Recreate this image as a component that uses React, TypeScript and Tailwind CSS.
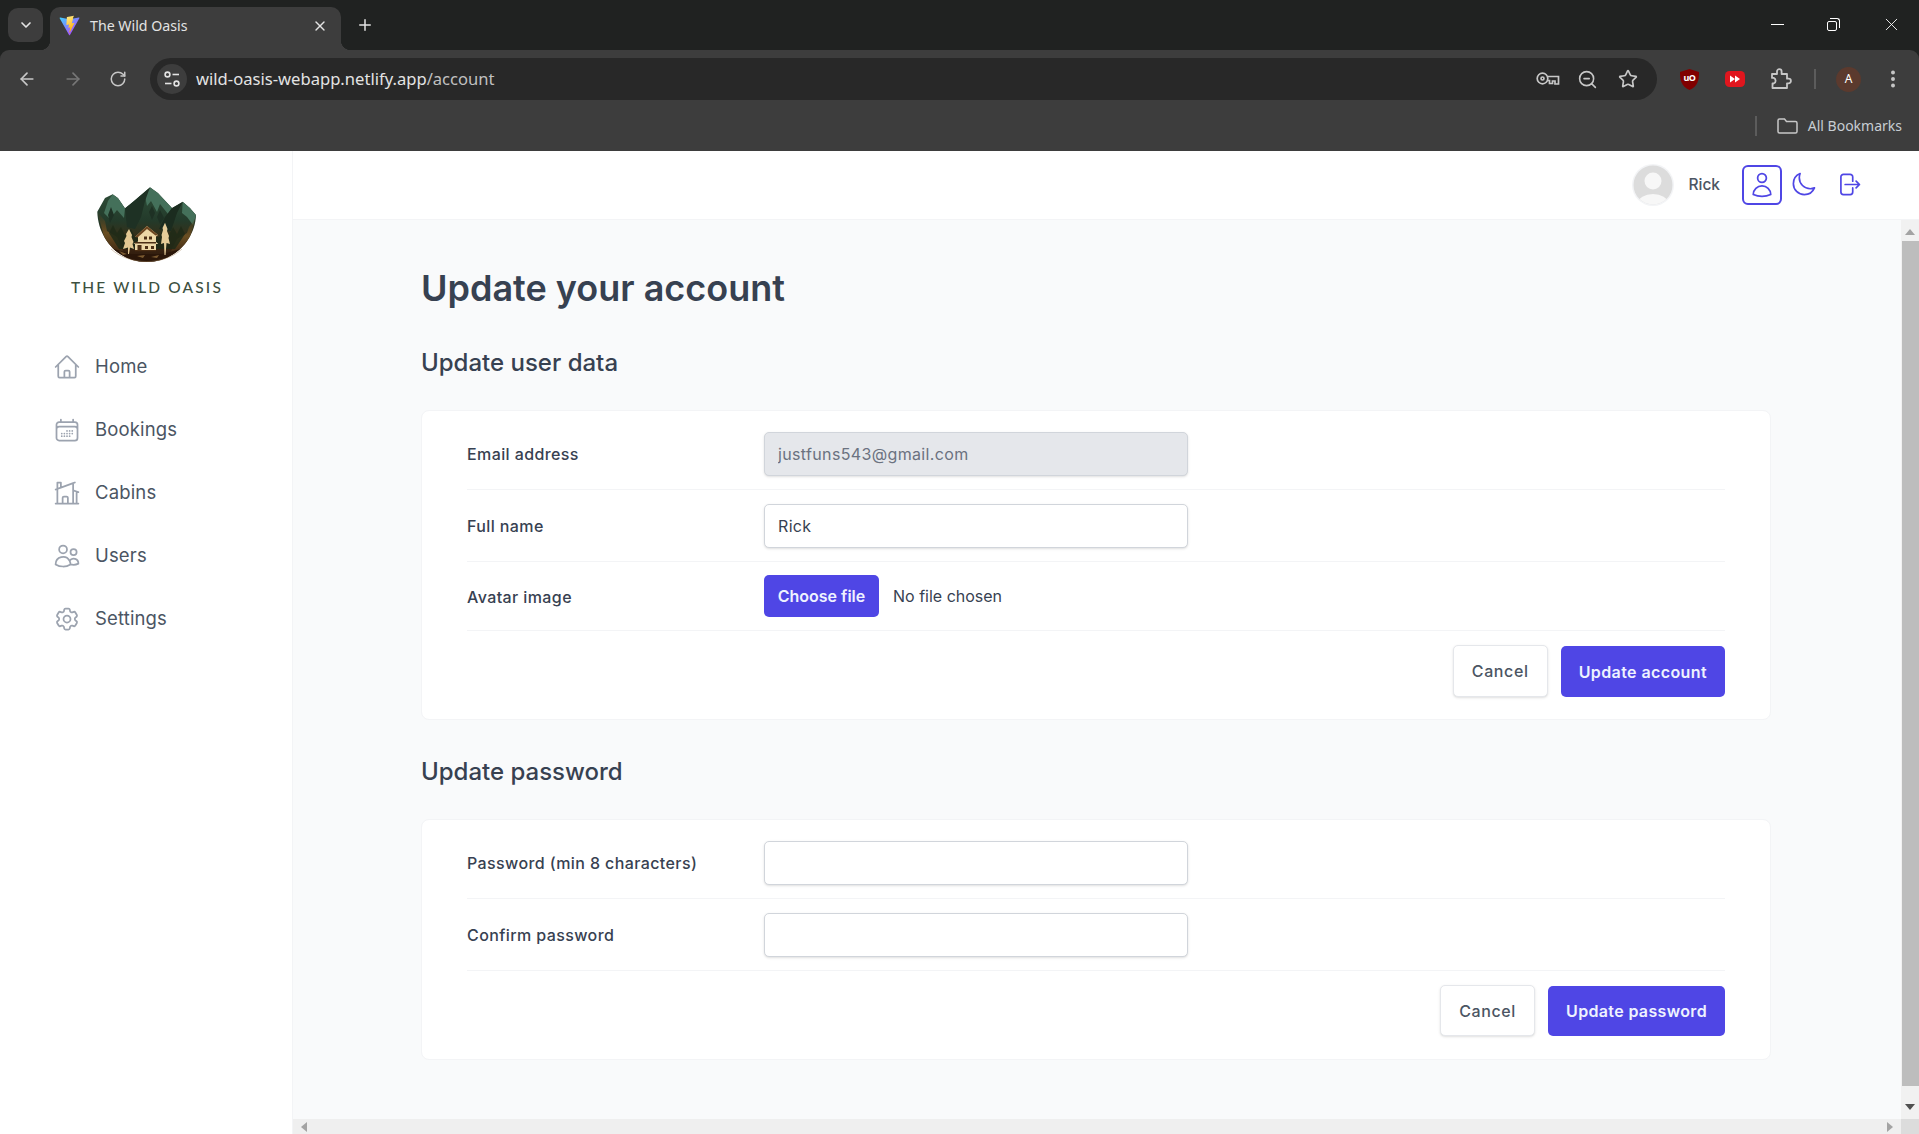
import type { ReactNode } from 'react';
import { ArrowLeft, ArrowRight, ChevronDown, EllipsisVertical, Plus, RotateCw, Star, X, ZoomOut } from 'lucide-react';
import {
  HiOutlineArrowRightOnRectangle,
  HiOutlineCalendarDays,
  HiOutlineCog6Tooth,
  HiOutlineHome,
  HiOutlineHomeModern,
  HiOutlineMoon,
  HiOutlineUser,
  HiOutlineUsers,
} from 'react-icons/hi2';

const NAV = [
  { label: 'Home', Icon: HiOutlineHome },
  { label: 'Bookings', Icon: HiOutlineCalendarDays },
  { label: 'Cabins', Icon: HiOutlineHomeModern },
  { label: 'Users', Icon: HiOutlineUsers },
  { label: 'Settings', Icon: HiOutlineCog6Tooth },
];

function ViteIcon() {
  return (
    <svg width="21" height="21" viewBox="0 0 32 32">
      <defs>
        <linearGradient id="vite-a" x1="0" y1="0" x2="0.9" y2="1">
          <stop offset="0" stopColor="#41d1ff" />
          <stop offset="1" stopColor="#bd34fe" />
        </linearGradient>
        <linearGradient id="vite-b" x1="0.3" y1="0" x2="0.6" y2="1">
          <stop offset="0" stopColor="#ffea83" />
          <stop offset="1" stopColor="#ffa800" />
        </linearGradient>
      </defs>
      <path d="M31 5 16.7 30.6c-.3.5-1 .5-1.3 0L1 5c-.3-.6.2-1.2.8-1.1L16 6.4l14.200-2.500c.6-.1 1.100.5.8 1.100Z" fill="url(#vite-a)" />
      <path d="M22.800 1 12.300 3c-.2 0-.3.2-.3.4l-.7 11.400c0 .3.200.5.500.4l2.900-.7c.300-.1.500.2.500.4l-.9 4.200c0 .3.200.5.500.4l1.800-.5c.3-.1.500.2.500.4l-1.400 6.800c-.1.400.5.600.7.300l.2-.3 6.800-13.600c.1-.3-.1-.5-.4-.5l-3 .6c-.3 0-.5-.2-.4-.5l2-6.800c.1-.3-.2-.5-.5-.5Z" fill="url(#vite-b)" />
    </svg>
  );
}

function TuneIcon() {
  return (
    <svg width="18" height="18" viewBox="0 0 18 18" fill="none" stroke="#e3e3e3" strokeWidth="1.6">
      <circle cx="4.500" cy="4.500" r="2.400" />
      <path d="M9.500 4.500H16" />
      <circle cx="13.500" cy="13.500" r="2.400" />
      <path d="M2 13.500h6.500" />
    </svg>
  );
}

function KeyIcon() {
  return (
    <svg width="24" height="14" viewBox="0 0 24 14" fill="none" stroke="#c7c7c7" strokeWidth="1.700">
      <circle cx="6.500" cy="6.500" r="5.300" />
      <circle cx="6.500" cy="6.500" r="1.500" />
      <path d="M11.800 4.500H22.500v7.500h-3.500V9h-2.500v2.500h-3V8.500h-1.500" />
    </svg>
  );
}

function PuzzleIcon() {
  return (
    <svg width="22" height="22" viewBox="0 0 22 22" fill="none" stroke="#c7c7c7" strokeWidth="1.800" strokeLinejoin="round">
      <path d="M2 6h5V3.500a2.300 2.300 0 0 1 4.600 0V6h5.400v4.700h1.600a2.300 2.300 0 0 1 0 4.600H17V20H2.500v-4.500h1.200a3 3 0 0 0 0-5.600H2Z" />
    </svg>
  );
}

function UBlockIcon() {
  return (
    <div className="relative flex h-[21px] w-[19px] items-center justify-center">
      <svg width="19" height="21" viewBox="0 0 19 21" className="absolute inset-0">
        <path d="M9.500 0 19 3c0 8-1 14-9.500 18C1 17 0 11 0 3Z" fill="#800000" />
      </svg>
      <span className="relative -mt-[3px] text-[9px] font-bold leading-none tracking-[-0.5px] text-white">uO</span>
    </div>
  );
}

function FastForwardIcon() {
  return (
    <svg width="20" height="16" viewBox="0 0 20 16">
      <rect width="20" height="16" rx="4.500" fill="#e0161e" />
      <path d="M5 4.500 10 8l-5 3.500ZM10 4.500 15 8l-5 3.500Z" fill="#fff" />
    </svg>
  );
}

function FolderIcon() {
  return (
    <svg width="21" height="16" viewBox="0 0 21 16" fill="none" stroke="#c7c7c7" strokeWidth="1.500">
      <path d="M1 2.500C1 1.500 1.500 1 2.500 1h5l2 2.500h9c1 0 1.500.5 1.500 1.500v8.500c0 1-.5 1.500-1.500 1.500h-16C1.500 15 1 14.500 1 13.500Z" />
    </svg>
  );
}

function BrowserChrome() {
  return (
    <div className="bg-[#202221] font-['Noto_Sans',sans-serif]">
      <div className="flex h-[50px] items-start text-[#e3e3e3]">
        <div className="ml-2 mt-2 flex h-[34px] w-[35px] items-center justify-center rounded-[10px] bg-[#3d3d3d]">
          <ChevronDown size={16} strokeWidth={2.500} />
        </div>
        <div className="relative ml-[7px] mt-[7px] flex h-[43px] w-[291px] items-center rounded-t-[10px] bg-[#3d3d3d] pb-[6px] pl-[9px] pr-[13px]">
          {/* flared corners where the tab meets the toolbar */}
          <div className="absolute bottom-0 left-[-10px] h-[10px] w-[10px] bg-[radial-gradient(circle_at_0_0,#202221_10px,#3d3d3d_10.5px)]" />
          <div className="absolute bottom-0 right-[-10px] h-[10px] w-[10px] bg-[radial-gradient(circle_at_100%_0,#202221_10px,#3d3d3d_10.5px)]" />
          <ViteIcon />
          <span className="ml-[10px] flex-1 text-[14.200px] text-[#e3e3e3]">The Wild Oasis</span>
          <X size={16} strokeWidth={2} />
        </div>
        <Plus className="ml-[15px] mt-[16px]" size={18} strokeWidth={2} />
        <div className="ml-auto mt-[24px] h-px w-[13px] bg-white" />
        <div className="relative ml-[43px] mt-[18px] h-[13px] w-[13px]">
          <div className="absolute bottom-0 left-0 h-[10px] w-[10px] rounded-[2px] border border-white" />
          <div className="absolute right-0 top-0 h-[10px] w-[10px] rounded-tr-[3px] border-r border-t border-white" />
        </div>
        <X className="ml-[41px] mr-[17px] mt-[14px]" size={21} strokeWidth={1} color="#fff" />
      </div>
      <div className="rounded-t-[9px] bg-[#3d3d3d]">
        <div className="flex h-[50px] items-center pt-[8px]">
          <ArrowLeft className="ml-[17px]" size={20} color="#c7c7c7" strokeWidth={2} />
          <ArrowRight className="ml-[26px]" size={20} color="#777" strokeWidth={2} />
          <RotateCw className="ml-[26px]" size={18} color="#c7c7c7" strokeWidth={2} />
          <div className="ml-[23px] flex h-[42px] w-[1507px] items-center rounded-full bg-[#282828] pl-[7px] pr-[19px]">
            <div className="flex h-[30px] w-[30px] items-center justify-center rounded-full bg-[#3d3d3d]">
              <TuneIcon />
            </div>
            <span className="ml-[9px] flex-1 pt-[1px] text-[16.600px] text-[#e3e3e3]">
              wild-oasis-webapp.netlify.app<span className="text-[#c0c0c0]">/account</span>
            </span>
            <KeyIcon />
            <ZoomOut className="ml-[17px]" size={21} color="#c7c7c7" strokeWidth={1.800} />
            <Star className="ml-[20px]" size={20} color="#c7c7c7" strokeWidth={2} />
          </div>
          <div className="ml-[23px]">
            <UBlockIcon />
          </div>
          <div className="ml-[26px]">
            <FastForwardIcon />
          </div>
          <div className="ml-[25px]">
            <PuzzleIcon />
          </div>
          <div className="ml-[22px] h-[20px] w-[2px] bg-[#5c5c5c]" />
          <div className="ml-[20px] flex h-[25px] w-[25px] items-center justify-center rounded-full bg-[#5b3a2e] text-[12px] text-white">
            A
          </div>
          <EllipsisVertical className="ml-[21px]" size={22} color="#c7c7c7" strokeWidth={2.300} />
        </div>
        <div className="flex h-[51px] items-center justify-end pr-[17px]">
          <div className="mr-[20px] h-[20px] w-[2px] bg-[#5c5c5c]" />
          <FolderIcon />
          <span className="ml-[10px] text-[14px] text-[#c7cdd3]">All Bookmarks</span>
        </div>
      </div>
    </div>
  );
}

function Logo() {
  const outline =
    'M0.300 24.700 L8 11 L15.700 7.300 L21 11 L28 21.300 L36 14.700 L53 0.300 L61 6 L75 21 L85.700 14.700 L93 21 L99 28 C98 54 76 75 49.700 75 C22 75 1 52 0.300 24.700 Z';
  return (
    <svg width="99" height="75" viewBox="0 0 99 75">
      <defs>
        <linearGradient id="logo-bg" x1="0" y1="0" x2="0" y2="1">
          <stop offset="0" stopColor="#2f4f3a" />
          <stop offset="0.45" stopColor="#233a2a" />
          <stop offset="0.62" stopColor="#33301a" />
          <stop offset="0.8" stopColor="#3a2412" />
          <stop offset="1" stopColor="#2a170a" />
        </linearGradient>
        <linearGradient id="logo-side" x1="0" y1="0" x2="0" y2="1">
          <stop offset="0" stopColor="#5c4520" stopOpacity="0" />
          <stop offset="0.5" stopColor="#6a4e22" />
          <stop offset="1" stopColor="#3a2412" />
        </linearGradient>
        <clipPath id="logo-clip">
          <path d={outline} />
        </clipPath>
      </defs>
      <path d={outline} fill="url(#logo-bg)" />
      <g clipPath="url(#logo-clip)">
        {/* lit faces */}
        <path d="M15.700 7.300 21 11 28 21.300 27 31 20 23 13 32 7 26 11 14Z" fill="#44705a" />
        <path d="M53 0.300 61 6 75 21 71 27 63 17 60 25 54 14 50 19 48 9Z" fill="#44705a" />
        <path d="M85.700 14.700 93 21 99 28 96 38 90 30 85 26Z" fill="#44705a" />
        {/* shaded faces */}
        <path d="M36 14.700 53 0.300 48 14 44 30 38 42 30 40 28 21.300Z" fill="#1e3124" />
        <path d="M75 21 85.700 14.700 80 26 74 44 62 42 68 30Z" fill="#1b2c1f" />
        <path d="M55 19 58 26 55 33 52 25ZM63 23 67 31 63 37 60 30ZM14 20 17 28 13 36 11 28Z" fill="#1e3124" />
        {/* forest and ground */}
        <path d="M0 24 8 34 10 44 20 50 28 68 10 60Z" fill="url(#logo-side)" />
        <path d="M99 30 92 40 90 46 80 52 72 68 90 60Z" fill="url(#logo-side)" />
        <path d="M12 46 16 38 20 46 24 40 28 48 34 42 38 50 62 50 66 42 72 48 76 40 80 47 84 39 88 47 78 62 22 62Z" fill="#1f2a18" opacity="0.850" />
        <path d="M10 60 34 67 66 67 90 60 80 75 20 75Z" fill="#2a1609" />
        <path d="M22 64 30 67 26 68ZM40 69 48 68 46 71ZM54 70 62 68 60 71Z" fill="#7a5a30" />
      </g>
      <path d="M14 62C24 71 37 74.500 49.700 74.500 C62 74.500 75 71 85 62" fill="none" stroke="#a0815a" strokeWidth="0.700" opacity="0.600" />
      {/* trees */}
      <path d="M32 42 35 48 34.500 50 36.500 55 35.500 57 37 62 33 60.500 32 67 31 67 31 60.500 26 62 28 56 27 54 29.500 49 29 47Z" fill="#e3c893" />
      <path d="M68 35.700 70.500 42 70 44 72 49 71.500 51 73 57 69.500 56 68.500 68 67.500 68 67 56 64 57 65 50 64.500 48 66 43 65.500 41Z" fill="#e6cd99" />
      {/* cabin */}
      <path d="M38 50 50 39 61 48 59 49.500 59 55 61.300 57 59 57 59 64 38 64 38 57 36.300 57 41 54.500 41 49.500Z" fill="#ecd7a6" />
      <path d="M38 50 50 39 61 48 58.500 48.500 50 42 40.500 50.500Z" fill="#6b4520" />
      <rect x="38" y="55" width="21" height="1.500" fill="#4b2e14" />
      <rect x="38" y="63" width="21" height="1.200" fill="#4b2e14" />
      <rect x="47" y="49.500" width="3" height="3" fill="#4b2e14" />
      <rect x="52" y="49.500" width="3" height="3" fill="#4b2e14" />
      <rect x="40.500" y="58" width="4" height="5" fill="#4b2e14" />
      <rect x="48" y="59" width="3" height="3" fill="#4b2e14" />
      <rect x="54" y="59" width="3" height="3" fill="#4b2e14" />
    </svg>
  );
}

function Sidebar() {
  return (
    <aside className="flex w-[293px] shrink-0 flex-col items-stretch border-r border-[#f3f4f6] bg-white">
      <div className="flex flex-col items-center pt-[36px]">
        <Logo />
        <div className="ml-[2px] mt-[19px] font-['Lato',sans-serif] text-[15.500px] font-medium leading-[13px] tracking-[2.150px] text-[#3d5040]">
          THE WILD OASIS
        </div>
      </div>
      <nav className="mt-[44px] flex flex-col gap-[5px] pl-[53px]">
        {NAV.map(({ label, Icon }) => (
          <div key={label} className="flex h-[58px] items-center gap-[14px] text-[18.500px] tracking-[0.150px] text-[#4b5563]">
            <Icon size={28} color="#9ca3af" />
            <span>{label}</span>
          </div>
        ))}
      </nav>
    </aside>
  );
}

function AvatarPlaceholder() {
  return (
    <svg width="44" height="44" viewBox="0 0 44 44">
      <defs>
        <clipPath id="avatar-clip">
          <circle cx="22" cy="22" r="19.500" />
        </clipPath>
      </defs>
      <circle cx="22" cy="22" r="21" fill="#f3f4f6" />
      <circle cx="22" cy="22" r="19.500" fill="#dcdcdc" />
      <g clipPath="url(#avatar-clip)" fill="#f7f7f7">
        <circle cx="22" cy="18" r="8.500" />
        <ellipse cx="22" cy="40" rx="15" ry="9" />
      </g>
    </svg>
  );
}

function Header() {
  return (
    <header className="flex h-[69px] shrink-0 items-center justify-end border-b border-[#f3f4f6] bg-white pb-[1px] pr-[57px]">
      <AvatarPlaceholder />
      <span className="ml-[13px] text-[15.500px] font-medium text-[#4b5563]">Rick</span>
      <div className="ml-[22px] flex h-[40px] w-[40px] items-center justify-center rounded-[6px] border-2 border-[#4f46e5]">
        <HiOutlineUser size={28} color="#4f46e5" />
      </div>
      <HiOutlineMoon className="ml-[8px]" size={27} color="#4f46e5" />
      <HiOutlineArrowRightOnRectangle className="ml-[18px]" size={27} color="#4f46e5" />
    </header>
  );
}

function FormRow({ label, children }: { label: string; children: ReactNode }) {
  return (
    <div className="grid grid-cols-[297px_424px] items-center border-b border-[#f3f4f6] pb-[13px] pt-[14px]">
      <label className="text-[16px] font-medium tracking-[0.400px] text-[#374151]">{label}</label>
      {children}
    </div>
  );
}

function TextInput({ value, disabled }: { value?: string; disabled?: boolean }) {
  return (
    <input
      readOnly
      defaultValue={value}
      disabled={disabled}
      className={
        disabled
          ? 'h-[44px] w-full rounded-[5px] border border-[#d1d5db] bg-[#e5e7eb] px-[13px] text-[16px] tracking-[0.350px] text-[#6b7280] shadow-sm outline-none'
          : 'h-[44px] w-full rounded-[5px] border border-[#d1d5db] bg-white px-[13px] text-[16px] tracking-[0.350px] text-[#374151] shadow-sm outline-none'
      }
    />
  );
}

function FormButtons({ submit, tall }: { submit: string; tall?: boolean }) {
  return (
    <div className={tall ? 'flex justify-end gap-[13px] pb-[22px] pt-[14px]' : 'flex justify-end gap-[13px] pb-[23px] pt-[14px]'}>
      <button className={tall ? 'h-[52px] w-[95px] rounded-[5px] border border-[#e5e7eb] bg-white text-[16px] font-medium tracking-[0.600px] text-[#4b5563] shadow-sm' : 'h-[51px] w-[95px] rounded-[5px] border border-[#e5e7eb] bg-white text-[16px] font-medium tracking-[0.600px] text-[#4b5563] shadow-sm'}>
        Cancel
      </button>
      <button className={tall ? 'mt-[1px] h-[51px] rounded-[5px] bg-[#4f46e5] px-[18px] text-[16px] font-semibold tracking-[0.400px] text-[#eef2ff]' : 'mt-[1px] h-[50px] rounded-[5px] bg-[#4f46e5] px-[18px] text-[16px] font-semibold tracking-[0.350px] text-[#eef2ff]'}>
        {submit}
      </button>
    </div>
  );
}

function Card({ children }: { children: ReactNode }) {
  return <div className="rounded-[8px] border border-[#f3f4f6] bg-white px-[45px] pt-[7px]">{children}</div>;
}

function AccountForm() {
  return (
    <div className="w-[1350px]">
      <h1 className="text-[36px] font-semibold leading-[43px] text-[#374151]">Update your account</h1>
      <h2 className="mb-[33px] mt-[39px] text-[24px] font-medium leading-[28px] text-[#374151]">Update user data</h2>
      <Card>
        <FormRow label="Email address">
          <TextInput value="justfuns543@gmail.com" disabled />
        </FormRow>
        <FormRow label="Full name">
          <TextInput value="Rick" />
        </FormRow>
        <FormRow label="Avatar image">
          <div className="-mt-[1px] flex items-center">
            <button className="h-[42px] w-[115px] rounded-[5px] bg-[#4f46e5] text-[16px] font-semibold text-[#eef2ff]">
              Choose file
            </button>
            <span className="ml-[14px] text-[16px] text-[#374151]">No file chosen</span>
          </div>
        </FormRow>
        <FormButtons submit="Update account" tall />
      </Card>
      <h2 className="mb-[33px] mt-[38px] text-[24px] font-medium leading-[28px] text-[#374151]">Update password</h2>
      <Card>
        <FormRow label="Password (min 8 characters)">
          <TextInput />
        </FormRow>
        <FormRow label="Confirm password">
          <TextInput />
        </FormRow>
        <FormButtons submit="Update password" />
      </Card>
    </div>
  );
}

function VerticalScrollbar() {
  return (
    <div className="flex w-[18px] shrink-0 flex-col items-center bg-[#f1f1f1]">
      <div className="mt-[9px] h-0 w-0 border-x-[5px] border-b-[6px] border-x-transparent border-b-[#a3a3a3]" />
      <div className="mt-[6px] w-[17px] flex-1 bg-[#bdbdbd]" />
      <div className="mb-[9px] mt-[18px] h-0 w-0 border-x-[5px] border-t-[6px] border-x-transparent border-t-[#505050]" />
    </div>
  );
}

function HorizontalScrollbar() {
  return (
    <div className="flex h-[15px] shrink-0 items-center bg-[#efefef]">
      <div className="ml-[8px] h-0 w-0 border-y-[5px] border-r-[6px] border-y-transparent border-r-[#a3a3a3]" />
      <div className="ml-auto h-0 w-0 border-y-[5px] border-l-[6px] border-y-transparent border-l-[#a3a3a3]" />
      <div className="ml-[8px] h-full w-[18px] bg-[#dcdcdc]" />
    </div>
  );
}

export default function App() {
  return (
    <div className="flex h-[1134px] w-full flex-col overflow-hidden bg-white font-['Inter',sans-serif]">
      <BrowserChrome />
      <div className="flex min-h-0 flex-1">
        <Sidebar />
        <div className="flex min-w-0 flex-1 flex-col">
          <Header />
          <div className="flex min-h-0 flex-1">
            <main className="min-w-0 flex-1 overflow-hidden bg-[#f9fafb] pl-[128px] pt-[47px]">
              <AccountForm />
            </main>
            <VerticalScrollbar />
          </div>
          <HorizontalScrollbar />
        </div>
      </div>
    </div>
  );
}
